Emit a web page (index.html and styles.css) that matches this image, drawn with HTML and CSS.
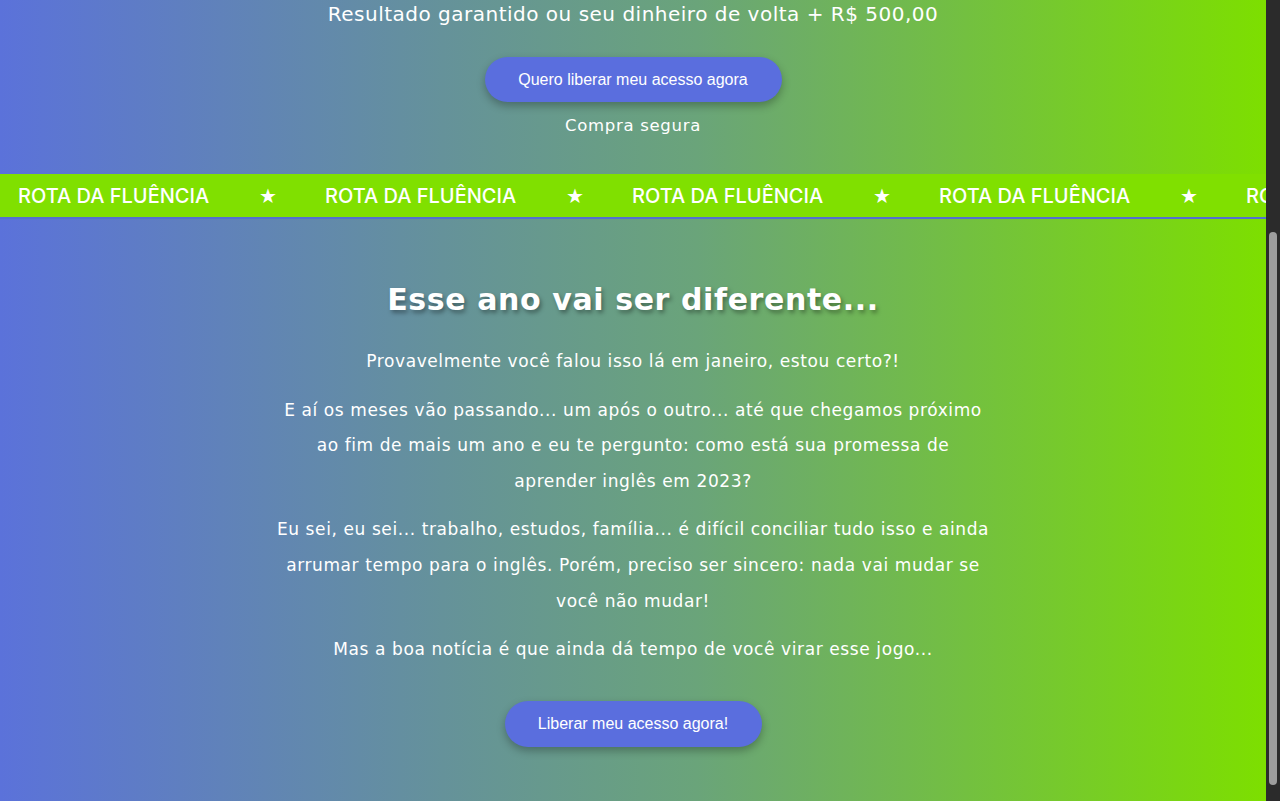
FILE: index.html
```html
<!DOCTYPE html>
<html lang="pt-BR">
<head>
<meta charset="utf-8">
<title>Rota da Fluência</title>
<link rel="stylesheet" href="styles.css">
</head>
<body>
<main class="page">
  <section class="offer">
    <p class="offer-guarantee">Resultado garantido ou seu dinheiro de volta + R$ 500,00</p>
    <a class="cta cta-offer" href="#">Quero liberar meu acesso agora</a>
    <p class="offer-secure">Compra segura</p>
  </section>

  <div class="ticker">
    <div class="ticker-track">
      <span class="ticker-item">ROTA DA FLUÊNCIA</span><span class="ticker-star">★</span>
      <span class="ticker-item">ROTA DA FLUÊNCIA</span><span class="ticker-star">★</span>
      <span class="ticker-item">ROTA DA FLUÊNCIA</span><span class="ticker-star">★</span>
      <span class="ticker-item">ROTA DA FLUÊNCIA</span><span class="ticker-star">★</span>
      <span class="ticker-item">ROTA DA FLUÊNCIA</span><span class="ticker-star">★</span>
    </div>
  </div>

  <section class="story">
    <h2 class="story-title">Esse ano vai ser diferente...</h2>
    <div class="story-text">
      <p>Provavelmente você falou isso lá em janeiro, estou certo?!</p>
      <p>E aí os meses vão passando... um após o outro... até que chegamos próximo ao fim de mais um ano e eu te pergunto: como está sua promessa de aprender inglês em 2023?</p>
      <p>Eu sei, eu sei... trabalho, estudos, família... é difícil conciliar tudo isso e ainda arrumar tempo para o inglês. Porém, preciso ser sincero: nada vai mudar se você não mudar!</p>
      <p>Mas a boa notícia é que ainda dá tempo de você virar esse jogo...</p>
    </div>
    <a class="cta cta-story" href="#">Liberar meu acesso agora!</a>
  </section>
</main>
</body>
</html>
```

FILE: styles.css
```css
html {
  background: #2b2b2b;
}

/* window scrollbar thumb, drawn over the dark gutter */
html::after {
  content: "";
  position: fixed;
  top: 232px;
  right: 3px;
  width: 8px;
  height: 553px;
  border-radius: 4px;
  background: #9d9d9d;
}

body {
  margin: 0 14px 0 0;
  font-family: "DejaVu Sans", "Open Sans", sans-serif;
  color: #ffffff;
  background: linear-gradient(90deg, #5b72da 0%, #65929a 35%, #6aa47a 55%, #7ddf00 100%);
  min-height: 801px;
}

.page {
  display: flex;
  flex-direction: column;
}

.offer {
  display: flex;
  flex-direction: column;
  align-items: center;
  padding: 0 0 36px;
}

.offer-guarantee {
  margin: 0;
  font-size: 20px;
  line-height: 28px;
  letter-spacing: 0.5px;
}

.cta {
  display: inline-flex;
  align-items: center;
  justify-content: center;
  background: #5a6ede;
  color: #ffffff;
  text-decoration: none;
  font-family: "Liberation Sans", Arial, sans-serif;
  font-size: 16px;
  border-radius: 23px;
  box-shadow: 0 4px 9px rgba(0, 0, 0, 0.28);
}

.cta-offer {
  margin-top: 29px;
  width: 297px;
  height: 45px;
}

.offer-secure {
  margin: 12px 0 0;
  font-size: 16.5px;
  line-height: 24px;
  letter-spacing: 0.7px;
}

.ticker {
  height: 43px;
  background: #80e000;
  border-bottom: 2px solid #5470d0;
  overflow: hidden;
  display: flex;
  align-items: center;
}

.ticker-track {
  display: flex;
  align-items: center;
  white-space: nowrap;
  padding-left: 18px;
  font-family: "Inter", sans-serif;
  font-size: 20px;
  font-weight: 500;
}

.ticker-item {
  display: inline-block;
  width: 192px;
}

.ticker-star {
  display: inline-block;
  width: 18px;
  margin: 0 48px 0 49px;
  text-align: center;
  font-family: "DejaVu Sans", sans-serif;
  font-size: 20px;
}

.story {
  display: flex;
  flex-direction: column;
  align-items: center;
  padding: 59px 0 54px;
}

.story-title {
  margin: 0;
  font-size: 30px;
  line-height: 44px;
  font-weight: 700;
  letter-spacing: 0.6px;
  text-shadow: 2px 3px 4px rgba(0, 0, 0, 0.35);
}

.story-text {
  max-width: 718px;
  margin-top: 22px;
  text-align: center;
  font-size: 17px;
  line-height: 35.6px;
  letter-spacing: 0.6px;
}

.story-text p {
  margin: 0 0 13px;
}

.story-text p:last-child {
  margin-bottom: 0;
}

.cta-story {
  margin-top: 33px;
  width: 257px;
  height: 46px;
}
```
